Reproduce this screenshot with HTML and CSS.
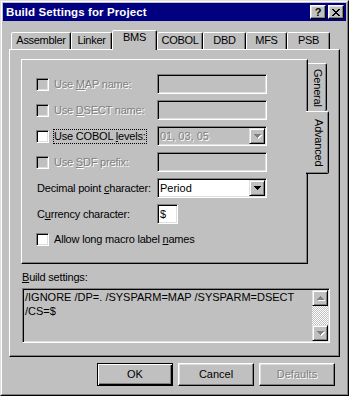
FILE: index.html
```html
<!DOCTYPE html>
<html>
<head>
<meta charset="utf-8">
<title>Build Settings for Project</title>
<link rel="stylesheet" href="styles.css">
</head>
<body>
<div class="window">
  <div class="window-inner">
    <div class="titlebar">
      <span class="title">Build Settings for Project</span>
      <div class="tb-buttons">
        <div class="tb-btn help">?</div>
        <div class="tb-btn close">
          <svg width="8" height="7" viewBox="0 0 8 7" shape-rendering="crispEdges"><path fill="#000" d="M0 0h2v1H0z M6 0h2v1H6z M1 1h2v1H1z M5 1h2v1H5z M2 2h4v1H2z M3 3h2v1H3z M2 4h4v1H2z M1 5h2v1H1z M5 5h2v1H5z M0 6h2v1H0z M6 6h2v1H6z"/></svg>
        </div>
      </div>
    </div>

    <div class="tabs">
      <div class="tab t1">Assembler</div>
      <div class="tab t2">Linker</div>
      <div class="tab tab-sel t3">BMS</div>
      <div class="tab t4">COBOL</div>
      <div class="tab t5">DBD</div>
      <div class="tab t6">MFS</div>
      <div class="tab t7">PSB</div>
    </div>

    <div class="panel">
      <div class="frame">
        <div class="vpanel">
          <div class="form">
            <div class="cell"><span class="chk chk-dis"></span><span class="lbl dis">Use <u>M</u>AP name:</span></div>
            <div class="field field-dis"></div>

            <div class="cell"><span class="chk chk-dis"></span><span class="lbl dis">Use <u>D</u>SECT name:</span></div>
            <div class="field field-dis"></div>

            <div class="cell"><span class="chk"></span><span class="lbl focus">Use COBOL <u>l</u>evels:</span></div>
            <div class="field field-dis combo">
              <span class="combo-text dis">01, 03, 05</span>
              <span class="dd-btn"><svg class="arrow arrow-dis" width="7" height="4" viewBox="0 0 7 4" shape-rendering="crispEdges"><path d="M0 0h7v1H0z M1 1h5v1H1z M2 2h3v1H2z M3 3h1v1H3z"/></svg></span>
            </div>

            <div class="cell"><span class="chk chk-dis"></span><span class="lbl dis">Use <u>S</u>DF prefix:</span></div>
            <div class="field field-dis"></div>

            <div class="cell"><span class="lbl">Decimal point <u>c</u>haracter:</span></div>
            <div class="field combo">
              <span class="combo-text">Period</span>
              <span class="dd-btn"><svg class="arrow" width="7" height="4" viewBox="0 0 7 4" shape-rendering="crispEdges"><path d="M0 0h7v1H0z M1 1h5v1H1z M2 2h3v1H2z M3 3h1v1H3z"/></svg></span>
            </div>

            <div class="cell"><span class="lbl">C<u>u</u>rrency character:</span></div>
            <div class="field field-small"><span class="combo-text">$</span></div>

            <div class="cell span2"><span class="chk"></span><span class="lbl">Allow long macro label <u>n</u>ames</span></div>
          </div>
        </div>
        <div class="vtabs">
          <div class="vtab vtab-general"><span class="vtext">General</span></div>
          <div class="vtab vtab-sel"><span class="vtext">Advanced</span></div>
        </div>
      </div>

      <div class="bs-label"><u>B</u>uild settings:</div>
      <div class="textarea">
        <div class="ta-text">/IGNORE /DP=. /SYSPARM=MAP /SYSPARM=DSECT<br>/CS=$</div>
        <div class="scroll">
          <div class="sb-btn"><svg class="arrow arrow-dis" width="7" height="4" viewBox="0 0 7 4" shape-rendering="crispEdges"><path d="M3 0h1v1H3z M2 1h3v1H2z M1 2h5v1H1z M0 3h7v1H0z"/></svg></div>
          <div class="sb-track"></div>
          <div class="sb-btn"><svg class="arrow arrow-dis" width="7" height="4" viewBox="0 0 7 4" shape-rendering="crispEdges"><path d="M0 0h7v1H0z M1 1h5v1H1z M2 2h3v1H2z M3 3h1v1H3z"/></svg></div>
        </div>
      </div>
    </div>

    <div class="buttons">
      <div class="btn btn-default">OK</div>
      <div class="btn">Cancel</div>
      <div class="btn"><span class="dis">Defaults</span></div>
    </div>
  </div>
</div>
</body>
</html>
```

FILE: styles.css
```css
* { box-sizing: border-box; }
html, body { margin: 0; padding: 0; }
body {
  width: 349px;
  height: 396px;
  background: #c0c0c0;
  font-family: "Liberation Sans", Arial, sans-serif;
  font-size: 11px;
  line-height: 13px;
  color: #000;
}
u { text-decoration: underline; text-underline-offset: 1px; }

.window {
  width: 349px;
  height: 396px;
  border: 1px solid;
  border-color: #dfdfdf #000 #000 #dfdfdf;
  background: #c0c0c0;
}
.window-inner {
  height: 100%;
  border: 1px solid;
  border-color: #fff #808080 #808080 #fff;
  padding: 1px;
  display: flex;
  flex-direction: column;
}

.titlebar {
  height: 18px;
  flex: none;
  background: #000080;
  display: flex;
  align-items: center;
  justify-content: space-between;
  padding: 0 2px 0 3px;
}
.title { color: #fff; font-weight: bold; font-size: 11.5px; letter-spacing: 0.1px; }
.tb-buttons { display: flex; gap: 2px; }
.tb-btn {
  width: 16px;
  height: 14px;
  background: #c0c0c0;
  border: 1px solid;
  border-color: #fff #000 #000 #fff;
  box-shadow: inset -1px -1px #808080, inset 1px 1px #dfdfdf;
  display: flex;
  align-items: center;
  justify-content: center;
  font-weight: bold;
  font-size: 11px;
  line-height: 11px;
}
.tb-btn.help { padding-top: 1px; }

/* top tabs */
.tabs {
  height: 28px;
  flex: none;
  display: flex;
  align-items: flex-end;
  padding-left: 8px;
}
.tab {
  height: 17px;
  border: 1px solid;
  border-bottom: none;
  border-color: #fff #000 transparent #fff;
  border-radius: 2px 2px 0 0;
  box-shadow: inset -1px 0 #808080;
  background: #c0c0c0;
  padding-top: 1px;
  text-align: center;
  letter-spacing: -0.3px;
}
.tab-sel {
  height: 20px;
  padding-top: 0;
  margin-bottom: -1px;
  position: relative;
  z-index: 2;
}
.t1 { width: 60px; }
.t2 { width: 41px; }
.t3 { width: 45px; }
.t4 { width: 46px; }
.t5 { width: 43px; }
.t6 { width: 41px; }
.t7 { width: 43px; }

.panel {
  flex: none;
  margin: 0 6px;
  height: 308px;
  border: 1px solid;
  border-color: #fff #000 #000 #fff;
  box-shadow: inset -1px -1px #808080;
  padding: 9px 0 0 11px;
}

.frame { display: flex; align-items: flex-start; }
.vpanel {
  width: 287px;
  height: 205px;
  flex: none;
  border: 1px solid;
  border-color: #fff #000 #000 #fff;
  box-shadow: inset -1px -1px #808080;
  padding: 14px 0 0 14px;
}
.vtabs { display: flex; flex-direction: column; }
.vtab {
  width: 19px;
  background: #c0c0c0;
  border: 1px solid;
  border-left: none;
  border-color: #fff #000 #000 transparent;
  border-radius: 0 2px 2px 0;
  box-shadow: inset -1px -1px #808080;
  display: flex;
  align-items: center;
  justify-content: center;
}
.vtab-general { margin-top: 4px; height: 48px; border-bottom: none; box-shadow: inset -1px 0 #808080; }
.vtab-sel { width: 23px; height: 63px; margin-left: -2px; padding-left: 2px; }
.vtext { writing-mode: vertical-rl; line-height: 11px; letter-spacing: -0.2px; }

.form {
  display: grid;
  grid-template-columns: 121px 110px;
  grid-auto-rows: 20px;
  row-gap: 6px;
  align-items: center;
}
.cell { display: flex; align-items: center; }
.span2 { grid-column: 1 / span 2; margin-top: -1px; }
.chk {
  width: 13px;
  height: 13px;
  flex: none;
  margin-right: 4px;
  background: #fff;
  border: 1px solid;
  border-color: #808080 #fff #fff #808080;
  box-shadow: inset 1px 1px #000, inset -1px -1px #dfdfdf;
}
.chk-dis { background: #c0c0c0; }
.lbl { border: 1px solid transparent; white-space: nowrap; letter-spacing: -0.2px; }
.lbl.focus { border: 1px dotted #000; }
.dis { color: #808080; text-shadow: 1px 1px 0 #fff; }

.field {
  height: 20px;
  width: 110px;
  background: #fff;
  border: 1px solid;
  border-color: #808080 #fff #fff #808080;
  box-shadow: inset 1px 1px #000, inset -1px -1px #dfdfdf;
  padding: 1px;
  display: flex;
  align-items: center;
}
.field-dis { background: #c0c0c0; }
.field-small { width: 21px; }
.combo-text { flex: 1; padding-left: 1px; white-space: nowrap; }
.dd-btn {
  width: 16px;
  height: 16px;
  flex: none;
  background: #c0c0c0;
  border: 1px solid;
  border-color: #dfdfdf #000 #000 #dfdfdf;
  box-shadow: inset 1px 1px #fff, inset -1px -1px #808080;
  display: flex;
  align-items: center;
  justify-content: center;
}
.arrow { fill: #000; display: block; }
.arrow-dis { fill: #808080; filter: drop-shadow(1px 1px 0 #fff); }

.bs-label { margin: 7px 0 0 1px; letter-spacing: -0.2px; }
.textarea {
  margin: 4px 0 0 1px;
  width: 308px;
  height: 55px;
  border: 1px solid;
  border-color: #808080 #fff #fff #808080;
  box-shadow: inset 1px 1px #000, inset -1px -1px #dfdfdf;
  padding: 1px;
  display: flex;
  background: #c0c0c0;
}
.ta-text { flex: 1; padding-left: 1px; line-height: 14px; white-space: nowrap; }
.scroll { width: 16px; display: flex; flex-direction: column; }
.sb-btn {
  height: 16px;
  flex: none;
  background: #c0c0c0;
  border: 1px solid;
  border-color: #dfdfdf #000 #000 #dfdfdf;
  box-shadow: inset 1px 1px #fff, inset -1px -1px #808080;
  display: flex;
  align-items: center;
  justify-content: center;
}
.sb-track {
  flex: 1;
  background: repeating-conic-gradient(#c0c0c0 0 25%, #fff 0 50%) 0 0 / 2px 2px;
}

.buttons {
  display: flex;
  justify-content: flex-end;
  gap: 5px;
  margin-top: 6px;
  padding-right: 11px;
}
.btn {
  width: 76px;
  height: 23px;
  border: 1px solid;
  border-color: #fff #000 #000 #fff;
  box-shadow: inset -1px -1px #808080, inset 1px 1px #dfdfdf;
  display: flex;
  align-items: center;
  justify-content: center;
}
.btn-default {
  border: 1px solid #000;
  box-shadow: inset 1px 1px #fff, inset -1px -1px #000, inset -2px -2px #808080;
}
```
